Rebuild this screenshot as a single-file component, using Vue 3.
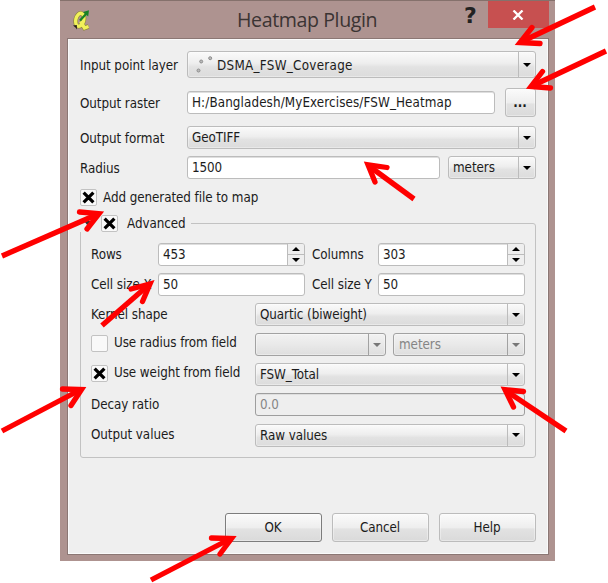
<script setup>
const arrows = [
  { shaft: 'M595 7L522 41.500', head: 'M532 27.500L520 42.500L540 43.500' },
  { shaft: 'M606 51L533 85.500', head: 'M542.500 71.500L531 86.500L550.500 88' },
  { shaft: 'M414 199L369 166', head: 'M387 167.500L368 164.800L375 182' },
  { shaft: 'M2 256L97 214.500', head: 'M79.500 212L99 213.700L87 229' },
  { shaft: 'M102 325.500L148 285.500', head: 'M131 289L150 284L142.500 301.500' },
  { shaft: 'M2 431L79 390.500', head: 'M62.500 389L81.500 389.500L71 405.500' },
  { shaft: 'M566 431L507 391.500', head: 'M523.500 391.500L505 389.700L513.500 407' },
  { shaft: 'M151 580L229 539.500', head: 'M211.500 538L231.500 538.500L220 554' },
]
</script>

<template>
  <main class="stage">
    <section class="window">
      <header class="titlebar">
        <svg class="logo" viewBox="0 0 18 22" width="18" height="22">
          <g fill="none" stroke="#8b8538" stroke-width="4.600">
            <ellipse cx="6.800" cy="9.800" rx="4" ry="6.600" transform="rotate(14 6.800 9.800)" />
            <path d="M7.500 11.500L11.500 18L15.500 16.500" />
          </g>
          <g fill="none" stroke="#f1f15b" stroke-width="3.400">
            <ellipse cx="6.800" cy="9.800" rx="4" ry="6.600" transform="rotate(14 6.800 9.800)" />
            <path d="M7.500 11.500L11.500 18L15.500 16.500" />
          </g>
          <path d="M7 10.500L13 4" stroke="#178226" stroke-width="2.200" />
          <path d="M10 2L16 .3L15.200 6.500Z" fill="#178226" />
          <path d="M0 15.500L3.800 15L4 19.500L2.500 17.500Z" fill="#241f18" />
        </svg>
        <h1>Heatmap Plugin</h1>
        <span class="help">?</span>
        <button class="close" aria-label="Close">
          <svg viewBox="0 0 12 10" width="12" height="10"><path d="M1.500 .5L10.500 9.500M10.500 .5L1.500 9.500" stroke="#fff" stroke-width="2.300" /></svg>
        </button>
      </header>

      <div class="client">
        <div class="row tall">
          <label class="name">Input point layer</label>
          <div class="combo grow">
            <span class="value layer">
              <svg viewBox="0 0 18 18" width="18" height="18" fill="#bbb" stroke="#8d8d8d"><circle cx="3.500" cy="14.500" r="1.500" /><circle cx="6.200" cy="5.500" r="1.500" /><circle cx="15.200" cy="2.200" r="1.500" /></svg>
              <span class="coverage">DSMA_FSW_Coverage</span>
            </span><i class="drop"></i>
          </div>
        </div>
        <div class="row raster">
          <label class="name">Output raster</label>
          <div class="field path">H:/Bangladesh/MyExercises/FSW_Heatmap</div>
          <button class="btn browse">...</button>
        </div>
        <div class="row format">
          <label class="name">Output format</label>
          <div class="combo grow"><span class="value">GeoTIFF</span><i class="drop"></i></div>
        </div>
        <div class="row radius">
          <label class="name">Radius</label>
          <div class="field size">1500</div>
          <div class="combo unit"><span class="value">meters</span><i class="drop"></i></div>
        </div>
        <div class="check add">
          <i class="box"><svg viewBox="0 0 12 12" width="13" height="13"><path d="M1.500 1.500L10.500 10.500M10.500 1.500L1.500 10.500" /></svg></i>
          <span>Add generated file to map</span>
        </div>

        <section class="group">
          <div class="legend">
            <i class="fold"></i>
            <i class="box"><svg viewBox="0 0 12 12" width="13" height="13"><path d="M1.500 1.500L10.500 10.500M10.500 1.500L1.500 10.500" /></svg></i>
            <span>Advanced</span>
          </div>
          <div class="rows">
            <div class="row">
              <label class="short">Rows</label>
              <div class="field spin"><span>453</span><i class="steps"><b class="up"></b><b class="down"></b></i></div>
              <label class="second">Columns</label>
              <div class="field spin"><span>303</span><i class="steps"><b class="up"></b><b class="down"></b></i></div>
            </div>
            <div class="row">
              <label class="short">Cell size X</label>
              <div class="field spin">50</div>
              <label class="second">Cell size Y</label>
              <div class="field spin">50</div>
            </div>
            <div class="row">
              <label class="long">Kernel shape</label>
              <div class="combo grow"><span class="value">Quartic (biweight)</span><i class="drop"></i></div>
            </div>
            <div class="row">
              <div class="check long"><i class="box"></i><span>Use radius from field</span></div>
              <div class="combo off source"><span class="value"></span><i class="drop"></i></div>
              <div class="combo off grow"><span class="value">meters</span><i class="drop"></i></div>
            </div>
            <div class="row">
              <div class="check long">
                <i class="box"><svg viewBox="0 0 12 12" width="13" height="13"><path d="M1.500 1.500L10.500 10.500M10.500 1.500L1.500 10.500" /></svg></i>
                <span>Use weight from field</span>
              </div>
              <div class="combo grow"><span class="value">FSW_Total</span><i class="drop"></i></div>
            </div>
            <div class="row">
              <label class="long">Decay ratio</label>
              <div class="field off grow">0.0</div>
            </div>
            <div class="row">
              <label class="long">Output values</label>
              <div class="combo grow"><span class="value">Raw values</span><i class="drop"></i></div>
            </div>
          </div>
        </section>

        <footer class="actions">
          <button class="btn primary">OK</button>
          <button class="btn">Cancel</button>
          <button class="btn">Help</button>
        </footer>
      </div>
    </section>

    <svg class="arrows" viewBox="0 0 608 583" width="608" height="583">
      <g v-for="(a, i) in arrows" :key="i">
        <path :d="a.shaft" />
        <path :d="a.head" stroke-linecap="round" />
      </g>
    </svg>
  </main>
</template>

<style>
body { background: #fff; overflow: hidden; }
</style>

<style scoped>
* { box-sizing: border-box; }
.stage {
  position: relative;
  width: 608px;
  height: 583px;
  padding-left: 60px;
  font: 13.3px/16px "DejaVu Sans Condensed", "DejaVu Sans", sans-serif;
  font-stretch: condensed;
  letter-spacing: -0.07px;
  color: #1c1c1c;
}
.window {
  width: 495px;
  height: 561px;
  padding: 0 6px 6px 7px;
  background: #ae9390;
  border-top: 1px solid #85716c;
}
.titlebar { display: flex; height: 37px; align-items: flex-start; }
.logo { margin: 9px 0 0 6px; }
h1 {
  margin: 4px 0 0;
  width: 308px;
  padding-left: 146px;
  font: 19.6px/30px "Open Sans", sans-serif;
  letter-spacing: -0.4px;
  color: #3b3433;
  white-space: nowrap;
}
.help {
  width: 14px;
  margin: 3px 0 0 65px;
  font: bold 22px/24px "DejaVu Sans", sans-serif;
  color: #222;
}
.close {
  display: flex;
  align-items: center;
  justify-content: center;
  width: 61px;
  height: 27px;
  margin-left: 10px;
  padding: 0 1px 0 0;
  border: 0;
  background: #c75050;
}
.client {
  height: 517px;
  padding: 12px 12px 0;
  background: #efefef;
  border: 1px solid #8b7774;
  box-shadow: inset 1px 1px #fafafa, inset -1px -1px #fafafa;
}
.row { display: flex; height: 23px; align-items: center; white-space: nowrap; }
.tall { height: 27px; }
.raster { height: 29px; margin-top: 10px; }
.format { margin-top: 9px; }
.radius { margin-top: 7px; }
.name { width: 107px; padding-top: 2px; }
.grow { flex: 1; }
.combo {
  display: flex;
  height: 100%;
  min-width: 0;
  border: 1px solid #bcbcbc;
  border-radius: 3px;
  background: linear-gradient(#fafafa, #eeeeee 45%, #e2e2e2 60%, #dcdcdc);
  box-shadow: inset 0 0 0 1px rgba(255, 255, 255, .35);
}
.value { display: flex; flex: 1; align-items: center; padding: 1px 0 0 4px; }
.layer { padding-left: 7px; gap: 4px; }
.coverage { padding-top: 1px; letter-spacing: .3px; }
.drop {
  display: flex;
  width: 17px;
  border-left: 1px solid #bcbcbc;
  align-items: center;
  justify-content: center;
}
.drop::before { content: ""; border: 4px solid transparent; border-top: 4px solid #000; border-bottom: 0; }
.combo.off { border-color: #a2a2a2; color: #858585; background: linear-gradient(#f2f2f2, #e9e9e9 50%, #dedede); }
.off .drop { border-color: #a2a2a2; }
.off .drop::before { border-top-color: #777; }
.off .value { padding-left: 5px; }
.field {
  display: flex;
  height: 23px;
  align-items: center;
  padding-left: 4px;
  border: 1px solid #bcbcbc;
  border-radius: 3px;
  background: #fff;
  box-shadow: inset 0 1px #dedede;
}
.field.off { background: #eee; color: #858585; border-color: #9e9e9e; }
.path { width: 308px; margin-right: 10px; padding-top: 1px; letter-spacing: .11px; }
.size { width: 253px; margin-right: 8px; padding-top: 1px; }
.unit { width: 88px; }
.btn {
  width: 97px;
  height: 29px;
  padding: 1px 1px 0 0;
  border: 1px solid #bcbcbc;
  border-radius: 3px;
  background: linear-gradient(#fbfbfb, #eeeeee 50%, #e2e2e2 56%, #dadada);
  box-shadow: inset 0 0 0 1px rgba(255, 255, 255, .35);
  font: inherit;
  letter-spacing: inherit;
  color: inherit;
}
.browse { width: 31px; font-weight: bold; }
.primary { border-color: #7d7d7d; }
.check { display: flex; align-items: center; gap: 6px; }
.row .check { margin-top: -3px; }
.add { height: 17px; margin-top: 10px; }
.box {
  display: flex;
  flex: none;
  width: 17px;
  height: 17px;
  align-items: center;
  justify-content: center;
  border: 1px solid #c2c2c2;
  border-radius: 2px;
  background: #f9f9f9;
}
.box path { stroke: #000; stroke-width: 3; }
.group {
  height: 235px;
  margin-top: 17px;
  border: 1px solid #c2c2c2;
  border-radius: 3px;
  padding: 0 11px 0 10px;
}
.legend {
  display: flex;
  width: 111px;
  height: 17px;
  margin: -9px 0 0 -11px;
  align-items: center;
  background: #efefef;
}
.fold { width: 0; margin-left: 4px; margin-right: 9px; border: 4px solid transparent; border-top: 5px solid #333; border-bottom: 0; }
.legend span { margin-left: 9px; }
.rows { display: grid; grid-auto-rows: 23px; row-gap: 7.100px; padding-top: 11px; }
.short { width: 67px; }
.second { width: 73px; padding-left: 7px; }
.spin { width: 147px; justify-content: space-between; }
.spin:not(:has(i)) { justify-content: flex-start; }
.long { width: 164px; }
.source { width: 131px; margin-right: 7px; }
.steps {
  display: flex;
  flex-direction: column;
  width: 17px;
  height: 21px;
  border-left: 1px solid #bcbcbc;
  border-radius: 0 2px 2px 0;
  background: #efefef;
}
.steps b { display: flex; flex: 1; align-items: center; justify-content: center; }
.up { border-bottom: 1px solid #bcbcbc; }
.up::before { content: ""; border: 4px solid transparent; border-bottom: 4px solid #000; border-top: 0; }
.down::before { content: ""; border: 4px solid transparent; border-top: 4px solid #000; border-bottom: 0; }
.actions { display: flex; justify-content: flex-end; gap: 10px; margin-top: 55px; }
.arrows { position: absolute; left: 0; top: 0; pointer-events: none; }
.arrows path { fill: none; stroke: #f00; stroke-width: 5.300; stroke-miterlimit: 8; }
</style>
